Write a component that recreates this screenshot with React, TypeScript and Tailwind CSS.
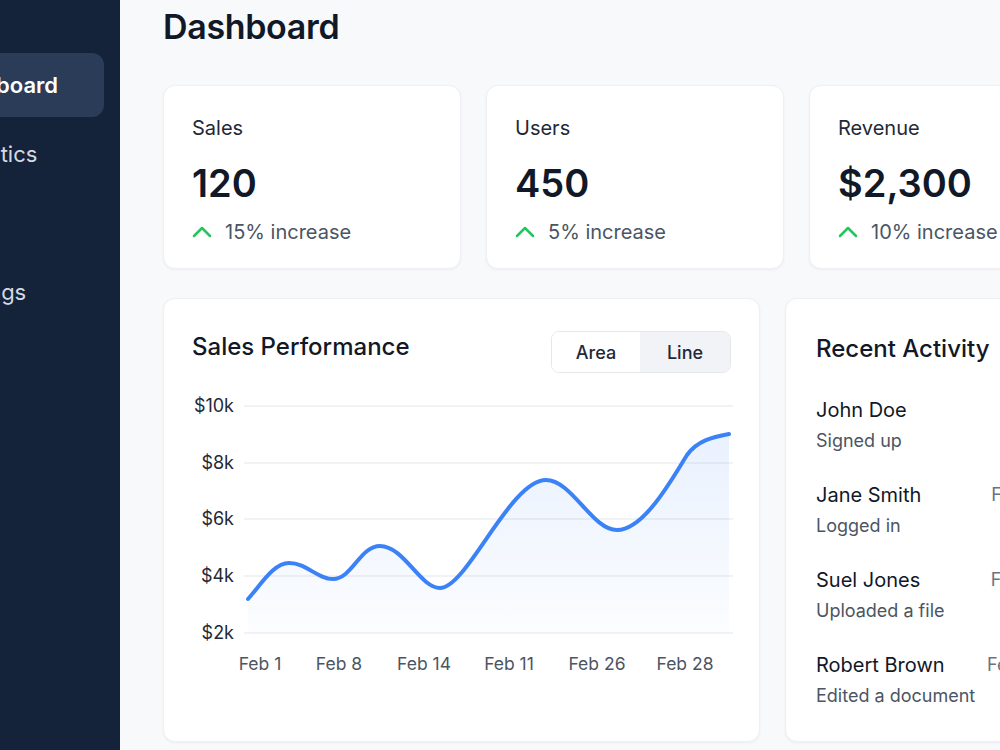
import React from "react";

const stats = [
  { label: "Sales", value: "120", change: "15% increase" },
  { label: "Users", value: "450", change: "5% increase" },
  { label: "Revenue", value: "$2,300", change: "10% increase" },
];

const activity = [
  { name: "John Doe", action: "Signed up", when: "Now" },
  { name: "Jane Smith", action: "Logged in", when: "Feb 12" },
  { name: "Suel Jones", action: "Uploaded a file", when: "Feb 10" },
  { name: "Robert Brown", action: "Edited a document", when: "Feb 08" },
];

const nav = ["Dashboard", "Analytics", "Team", "Settings"];

function ChevronUp() {
  return (
    <svg width="24" height="24" viewBox="0 0 24 24" fill="none" className="shrink-0">
      <polyline
        points="2 16 10 8 18 16"
        stroke="#22c55e"
        strokeWidth="2.5"
        strokeLinecap="round"
        strokeLinejoin="round"
      />
    </svg>
  );
}

function SalesChart() {
  const grid = [
    { y: 15, label: "$10k" },
    { y: 72, label: "$8k" },
    { y: 128, label: "$6k" },
    { y: 185, label: "$4k" },
    { y: 242, label: "$2k" },
  ];
  const ticks = [
    { x: 68, label: "Feb 1" },
    { x: 147, label: "Feb 8" },
    { x: 232, label: "Feb 14" },
    { x: 317, label: "Feb 11" },
    { x: 405, label: "Feb 26" },
    { x: 493, label: "Feb 28" },
  ];
  const line =
    "M56,208 C70,192 82,172 97,172 C115,172 125,188 141,188 C160,188 168,155 188,155 C212,155 228,197 248,197 C275,197 318,89 354,89 C380,89 400,139 425,139 C452,139 480,88 495,64 C505,50 520,46 537,43";
  return (
    <svg width="541" height="290" viewBox="0 0 541 290" className="mt-[18px] block">
      <defs>
        <linearGradient id="salesFill" x1="0" y1="0" x2="0" y2="1">
          <stop offset="0%" stopColor="#3b82f6" stopOpacity="0.11" />
          <stop offset="100%" stopColor="#3b82f6" stopOpacity="0.02" />
        </linearGradient>
      </defs>
      {grid.map((g) => (
        <g key={g.label}>
          <line x1="52" x2="541" y1={g.y} y2={g.y} stroke="#eceef2" strokeWidth="1.5" />
          <text
            x="42"
            y={g.y + 6}
            textAnchor="end"
            fontSize="18"
            fill="#1f2937"
            fontFamily="Inter, sans-serif"
          >
            {g.label}
          </text>
        </g>
      ))}
      <path d={`${line} L537,242 L56,242 Z`} fill="url(#salesFill)" />
      <path d={line} fill="none" stroke="#3b82f6" strokeWidth="4" strokeLinecap="round" />
      {ticks.map((t) => (
        <text
          key={t.label}
          x={t.x}
          y="279"
          textAnchor="middle"
          fontSize="17.5"
          fill="#4b5563"
          fontFamily="Inter, sans-serif"
        >
          {t.label}
        </text>
      ))}
    </svg>
  );
}

export default function App() {
  return (
    <div
      className="w-[1000px] h-[750px] overflow-hidden flex bg-[#f8f9fb]"
      style={{ fontFamily: "Inter, 'Noto Sans', sans-serif" }}
    >
      <aside className="w-[210px] -ml-[90px] shrink-0 bg-[#15233a] px-4 pt-[53px] flex flex-col gap-[5px]">
        {nav.map((item, i) => (
          <div
            key={item}
            className={
              i === 0
                ? "h-16 rounded-xl px-4 flex items-center text-[22px] font-semibold text-white bg-[#2b3c58]"
                : "h-16 rounded-xl px-4 flex items-center text-[22px] text-[#d5dae2]"
            }
          >
            {item}
          </div>
        ))}
      </aside>

      <main className="flex-1 shrink-0 pl-[43px] pt-[7px]">
        <h1 className="text-[34px] leading-[40px] font-semibold text-[#111827] tracking-[-0.01em]">
          Dashboard
        </h1>

        <div className="mt-[38px] flex gap-[25px]">
          {stats.map((s) => (
            <div
              key={s.label}
              className="w-[298px] h-[184px] shrink-0 bg-white rounded-xl border border-[#eef0f3] shadow-[0_1px_3px_rgba(16,24,40,0.05)] px-7 pt-7"
            >
              <div className="text-[20px] leading-[28px] text-[#1f2937]">{s.label}</div>
              <div className="mt-[17px] text-[38px] leading-[48px] font-semibold text-[#111827] whitespace-nowrap">
                {s.value}
              </div>
              <div className="mt-[11px] flex items-center gap-[9px] text-[20px] leading-[28px] text-[#4b5563] whitespace-nowrap">
                <ChevronUp />
                {s.change}
              </div>
            </div>
          ))}
        </div>

        <div className="mt-[29px] flex gap-[25px]">
          <section className="w-[597px] h-[444px] shrink-0 bg-white rounded-xl border border-[#eef0f3] shadow-[0_1px_3px_rgba(16,24,40,0.05)] px-7 pt-8">
            <div className="flex items-start justify-between">
              <h2 className="text-[24px] leading-[32px] font-medium text-[#111827]">
                Sales Performance
              </h2>
              <div className="flex h-[42px] rounded-lg border border-[#e5e7eb] overflow-hidden text-[18px] font-medium text-[#1f2937]">
                <div className="w-[88px] flex items-center justify-center bg-white">Area</div>
                <div className="w-[90px] flex items-center justify-center bg-[#f1f3f7]">Line</div>
              </div>
            </div>
            <SalesChart />
          </section>

          <section className="w-[293px] h-[444px] shrink-0 bg-white rounded-xl border border-[#eef0f3] shadow-[0_1px_3px_rgba(16,24,40,0.05)] pl-[30px] pr-[31px] pt-[34px]">
            <h2 className="text-[24px] leading-[32px] font-medium text-[#111827] whitespace-nowrap">
              Recent Activity
            </h2>
            <div className="mt-[31px] flex flex-col gap-[27px]">
              {activity.map((a) => (
                <div key={a.name} className="flex justify-between">
                  <div>
                    <div className="text-[20px] leading-[28px] text-[#111827] whitespace-nowrap">
                      {a.name}
                    </div>
                    <div className="mt-[4px] text-[18px] leading-[26px] text-[#4b5563] whitespace-nowrap">
                      {a.action}
                    </div>
                  </div>
                  <div className="text-[18px] leading-[28px] text-[#6b7280] whitespace-nowrap">
                    {a.when}
                  </div>
                </div>
              ))}
            </div>
          </section>
        </div>
      </main>
    </div>
  );
}
